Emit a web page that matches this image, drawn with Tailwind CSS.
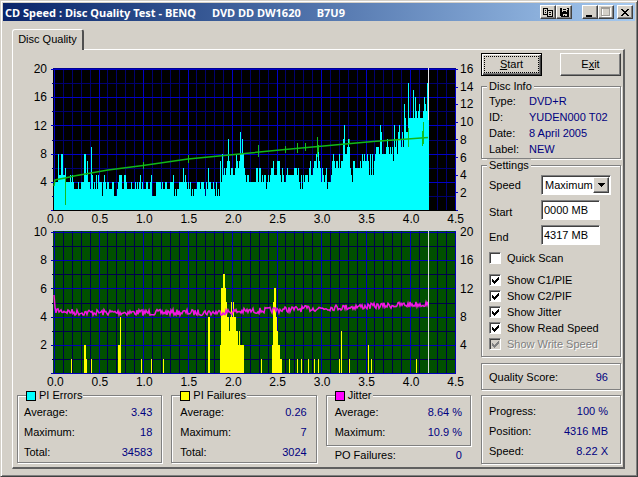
<!DOCTYPE html>
<html lang="en">
<head>
  <meta charset="UTF-8" />
  <meta name="viewport" content="width=device-width, initial-scale=1" />
  <title>CD Speed : Disc Quality Test</title>
  <script src="https://cdn.jsdelivr.net/npm/@tailwindcss/browser@4"></script>
</head>
<body class="bg-[#d4d0c8] text-black font-['Liberation_Sans',Arial,sans-serif] text-[11px] leading-[13px]">
<div class="min-h-screen flex flex-col p-[2px] border border-t-[#d4d0c8] border-l-[#d4d0c8] border-r-[#404040] border-b-[#404040] shadow-[inset_1px_1px_0_#fff,inset_-1px_-1px_0_#808080]">

  <!-- TITLE BAR -->
  <header class="h-[18px] flex items-center pl-[2px] pr-[2px] bg-linear-to-r from-[#0a246a] to-[#a6caf0]">
    <h1 class="flex-1 flex gap-4 text-white font-bold whitespace-pre font-['Noto_Sans','Open_Sans',sans-serif]"><span>CD Speed : Disc Quality Test - BENQ</span><span>DVD DD DW1620</span><span>B7U9</span></h1>
    <div class="flex">
      <button aria-label="Copy" class="w-4 h-[14px] bg-[#d4d0c8] border border-t-white border-l-white border-r-[#404040] border-b-[#404040] shadow-[inset_-1px_-1px_0_#808080] flex items-center justify-center">
        <svg width="10" height="9" viewBox="0 0 10 9" shape-rendering="crispEdges"><path d="M.5.5h4v6h-4zM4.500 2.500h5v6h-5z" fill="#d4d0c8" stroke="#000"/><path d="M2 2.500h1M2 4.500h1M6 4.500h2M6 6.500h2" stroke="#000"/></svg>
      </button>
      <button aria-label="Save" class="w-4 h-[14px] bg-[#d4d0c8] border border-t-white border-l-white border-r-[#404040] border-b-[#404040] shadow-[inset_-1px_-1px_0_#808080] flex items-center justify-center">
        <svg width="9" height="9" viewBox="0 0 9 9" shape-rendering="crispEdges"><path d="M0 0h9v9H1L0 8z" fill="#000"/><path d="M2 0h5v4H2zM3 6h4v2H5V7H4v1H3zM8 1h-1v1h1z" fill="#d4d0c8"/><path d="M3 1.500h3M3 3.500h3" stroke="#000"/></svg>
      </button>
      <button aria-label="Minimize" class="ml-[10px] w-4 h-[14px] bg-[#d4d0c8] border border-t-white border-l-white border-r-[#404040] border-b-[#404040] shadow-[inset_-1px_-1px_0_#808080] flex items-center justify-center">
        <svg width="10" height="9" viewBox="0 0 10 9" shape-rendering="crispEdges"><path d="M1 7h6v2H1z"/></svg>
      </button>
      <button aria-label="Maximize" disabled class="w-4 h-[14px] bg-[#d4d0c8] border border-t-white border-l-white border-r-[#404040] border-b-[#404040] shadow-[inset_-1px_-1px_0_#808080] flex items-center justify-center">
        <svg width="10" height="10" viewBox="0 0 10 10" shape-rendering="crispEdges"><path d="M1.500 1.500h8v8h-8z" fill="none" stroke="#fff"/><path d="M.5.5h8v8h-8zM0 1.500h9" fill="none" stroke="#a09d98"/></svg>
      </button>
      <button aria-label="Close" class="ml-[3px] w-4 h-[14px] bg-[#d4d0c8] border border-t-white border-l-white border-r-[#404040] border-b-[#404040] shadow-[inset_-1px_-1px_0_#808080] flex items-center justify-center">
        <svg width="8" height="7" viewBox="0 0 8 7" shape-rendering="crispEdges"><path d="M0 0h2v1h1v1h2V1h1V0h2v1H7v1H6v1H5v1h1v1h1v1h1v1H6V6H5V5H3v1H2v1H0V6h1V5h1V4h1V3H2V2H1V1H0z"/></svg>
      </button>
    </div>
  </header>

  <main class="flex-1 flex flex-col mt-2 ml-[9px] mr-[10px] mb-[5px]">
    <!-- TAB -->
    <div role="tablist" class="flex">
      <button role="tab" aria-selected="true" class="relative z-10 h-[21px] -mb-px w-[72px] pb-px bg-[#d4d0c8] border-t border-l border-white border-r-2 border-r-[#505050] rounded-t-[3px]">Disc Quality</button>
    </div>

    <!-- TAB PAGE -->
    <div class="flex-1 flex gap-[10px] pt-[3px] pl-1 pr-[2px] border-t border-l border-t-white border-l-white border-r-2 border-b-2 border-r-[#606060] border-b-[#606060]">

      <!-- CHARTS -->
      <section class="flex-1 pt-[10px]">
        <div class="flex text-[12px]">
          <div class="w-9 h-[126px] pr-[6px] flex flex-col justify-between text-right"><span>20</span><span>16</span><span>12</span><span>8</span><span>4</span></div>
          <svg id="pie" class="flex-1 min-w-0 mt-[5px] h-[143px] overflow-visible" viewBox="0 0 403 143" preserveAspectRatio="none" shape-rendering="crispEdges"></svg>
          <div class="w-[15px] h-[137px] pl-1 flex flex-col justify-between"><span>16</span><span>14</span><span>12</span><span>10</span><span>8</span><span>6</span><span>4</span><span>2</span></div>
        </div>
        <div class="mt-[2px] ml-[30px] mr-[7px] flex justify-between text-[12px]"><span>0.0</span><span>0.5</span><span>1.0</span><span>1.5</span><span>2.0</span><span>2.5</span><span>3.0</span><span>3.5</span><span>4.0</span><span>4.5</span></div>

        <div class="flex text-[12px]">
          <div class="w-9 h-[126px] pr-[6px] flex flex-col justify-between text-right"><span>10</span><span>8</span><span>6</span><span>4</span><span>2</span></div>
          <svg id="pif" class="flex-1 min-w-0 mt-[5px] h-[143px] overflow-visible" viewBox="0 0 403 143" preserveAspectRatio="none" shape-rendering="crispEdges"></svg>
          <div class="w-[15px] h-[126px] pl-1 flex flex-col justify-between"><span>20</span><span>16</span><span>12</span><span>8</span><span>4</span></div>
        </div>
        <div class="mt-[2px] ml-[30px] mr-[7px] flex justify-between text-[12px]"><span>0.0</span><span>0.5</span><span>1.0</span><span>1.5</span><span>2.0</span><span>2.5</span><span>3.0</span><span>3.5</span><span>4.0</span><span>4.5</span></div>

        <!-- TOTALS -->
        <div class="grid grid-cols-3 items-start gap-[9px] leading-[20px]">
          <fieldset class="min-w-0 pl-[6px] pr-[9px] border border-[#808080] shadow-[1px_1px_0_#fff,inset_1px_1px_0_#fff]">
            <legend class="flex items-center gap-1 ml-[2px] pl-px pr-px leading-[13px] bg-[#d4d0c8]"><i class="size-2 bg-[#00ffff] outline outline-black"></i>PI Errors</legend>
            <dl>
              <div class="flex justify-between"><dt>Average:</dt><dd class="text-[#000080]">3.43</dd></div>
              <div class="flex justify-between"><dt>Maximum:</dt><dd class="text-[#000080]">18</dd></div>
              <div class="flex justify-between"><dt>Total:</dt><dd class="text-[#000080]">34583</dd></div>
            </dl>
          </fieldset>
          <fieldset class="min-w-0 pl-[8px] pr-[9px] border border-[#808080] shadow-[1px_1px_0_#fff,inset_1px_1px_0_#fff]">
            <legend class="flex items-center gap-1 pl-px pr-px leading-[13px] bg-[#d4d0c8]"><i class="size-2 bg-[#ffff00] outline outline-black"></i>PI Failures</legend>
            <dl>
              <div class="flex justify-between"><dt>Average:</dt><dd class="text-[#000080]">0.26</dd></div>
              <div class="flex justify-between"><dt>Maximum:</dt><dd class="text-[#000080]">7</dd></div>
              <div class="flex justify-between"><dt>Total:</dt><dd class="text-[#000080]">3024</dd></div>
            </dl>
          </fieldset>
          <div class="min-w-0">
            <fieldset class="pl-[8px] pr-[8px] pb-[3px] border border-[#808080] shadow-[1px_1px_0_#fff,inset_1px_1px_0_#fff]">
              <legend class="flex items-center gap-1 pl-px pr-px leading-[13px] bg-[#d4d0c8]"><i class="size-2 bg-[#ff00ff] outline outline-black"></i>Jitter</legend>
              <dl>
                <div class="flex justify-between"><dt>Average:</dt><dd class="text-[#000080]">8.64 %</dd></div>
                <div class="flex justify-between"><dt>Maximum:</dt><dd class="text-[#000080]">10.9 %</dd></div>
              </dl>
            </fieldset>
            <dl class="flex justify-between leading-[18px] px-[9px]"><dt>PO Failures:</dt><dd class="text-[#000080]">0</dd></dl>
          </div>
        </div>
      </section>

      <!-- SIDE PANEL -->
      <aside class="w-[140px]">
        <div class="flex justify-between">
          <button class="w-[61px] h-[23px] p-[2px] border border-black shadow-[inset_1px_1px_0_#fff,inset_-1px_-1px_0_#404040,inset_-2px_-2px_0_#808080]"><span class="flex h-full items-center justify-center border border-dotted border-black"><span><u>S</u>tart</span></span></button>
          <button class="w-[61px] h-[23px] border border-t-white border-l-white border-r-[#404040] border-b-[#404040] shadow-[inset_-1px_-1px_0_#808080]">E<u>x</u>it</button>
        </div>

        <fieldset class="mt-1 pl-[7px] pb-px leading-4 border border-[#808080] shadow-[1px_1px_0_#fff,inset_1px_1px_0_#fff]">
          <legend class="px-[2px] -ml-[2px] leading-[13px] bg-[#d4d0c8]">Disc Info</legend>
          <dl class="grid grid-cols-[40px_1fr]">
            <dt>Type:</dt><dd class="text-[#000080]">DVD+R</dd>
            <dt>ID:</dt><dd class="text-[#000080] whitespace-nowrap">YUDEN000 T02</dd>
            <dt>Date:</dt><dd class="text-[#000080]">8 April 2005</dd>
            <dt>Label:</dt><dd class="text-[#000080]">NEW</dd>
          </dl>
        </fieldset>

        <fieldset class="pl-[7px] pb-[4px] border border-[#808080] shadow-[1px_1px_0_#fff,inset_1px_1px_0_#fff]">
          <legend class="px-[2px] -ml-[2px] leading-[13px] bg-[#d4d0c8]">Settings</legend>
          <div class="mt-[3px] grid grid-cols-[52px_1fr] gap-y-[5px] items-center">
            <label for="speed">Speed</label>
            <div class="relative w-[70px]">
              <select id="speed" class="block w-full h-5 pl-[3px] appearance-none bg-white border border-t-[#808080] border-l-[#808080] border-r-white border-b-white shadow-[inset_1px_1px_0_#404040]"><option>Maximum</option><option>8 X</option><option>4 X</option></select>
              <span class="absolute right-[2px] top-[2px] w-4 h-4 pointer-events-none bg-[#d4d0c8] border border-t-white border-l-white border-r-[#404040] border-b-[#404040] shadow-[inset_-1px_-1px_0_#808080] flex items-center justify-center">
                <svg width="7" height="4" viewBox="0 0 7 4" shape-rendering="crispEdges"><path d="M0 0h7v1H6v1H5v1H4v1H3V3H2V2H1V1H0z"/></svg>
              </span>
            </div>
            <label for="start" class="pt-1">Start</label>
            <input id="start" type="text" value="0000 MB" class="w-[59px] h-5 pl-[2px] bg-white border border-t-[#808080] border-l-[#808080] border-r-white border-b-white shadow-[inset_1px_1px_0_#404040]" />
            <label for="end" class="pt-1">End</label>
            <input id="end" type="text" value="4317 MB" class="w-[59px] h-5 pl-[2px] bg-white border border-t-[#808080] border-l-[#808080] border-r-white border-b-white shadow-[inset_1px_1px_0_#404040]" />
          </div>
          <div class="mt-[5px] leading-4">
            <label class="flex items-center gap-[6px] mb-[6px]"><input type="checkbox" class="appearance-none size-3 bg-white border border-t-[#808080] border-l-[#808080] border-r-white border-b-white shadow-[inset_1px_1px_0_#404040]" />Quick Scan</label>
            <label class="flex items-center gap-[6px]"><span class="grid place-items-center"><input type="checkbox" checked class="peer col-start-1 row-start-1 appearance-none size-3 bg-white border border-t-[#808080] border-l-[#808080] border-r-white border-b-white shadow-[inset_1px_1px_0_#404040]" /><svg class="col-start-1 row-start-1 invisible peer-checked:visible pointer-events-none" width="7" height="7" viewBox="0 0 7 7" shape-rendering="crispEdges"><path d="M0 2h1v1h1v1h1V3h1V2h1V1h1V0h1v3H6v1H5v1H4v1H3v1H2V6H1V5H0z"/></svg></span>Show C1/PIE</label>
            <label class="flex items-center gap-[6px]"><span class="grid place-items-center"><input type="checkbox" checked class="peer col-start-1 row-start-1 appearance-none size-3 bg-white border border-t-[#808080] border-l-[#808080] border-r-white border-b-white shadow-[inset_1px_1px_0_#404040]" /><svg class="col-start-1 row-start-1 invisible peer-checked:visible pointer-events-none" width="7" height="7" viewBox="0 0 7 7" shape-rendering="crispEdges"><path d="M0 2h1v1h1v1h1V3h1V2h1V1h1V0h1v3H6v1H5v1H4v1H3v1H2V6H1V5H0z"/></svg></span>Show C2/PIF</label>
            <label class="flex items-center gap-[6px]"><span class="grid place-items-center"><input type="checkbox" checked class="peer col-start-1 row-start-1 appearance-none size-3 bg-white border border-t-[#808080] border-l-[#808080] border-r-white border-b-white shadow-[inset_1px_1px_0_#404040]" /><svg class="col-start-1 row-start-1 invisible peer-checked:visible pointer-events-none" width="7" height="7" viewBox="0 0 7 7" shape-rendering="crispEdges"><path d="M0 2h1v1h1v1h1V3h1V2h1V1h1V0h1v3H6v1H5v1H4v1H3v1H2V6H1V5H0z"/></svg></span>Show Jitter</label>
            <label class="flex items-center gap-[6px]"><span class="grid place-items-center"><input type="checkbox" checked class="peer col-start-1 row-start-1 appearance-none size-3 bg-white border border-t-[#808080] border-l-[#808080] border-r-white border-b-white shadow-[inset_1px_1px_0_#404040]" /><svg class="col-start-1 row-start-1 invisible peer-checked:visible pointer-events-none" width="7" height="7" viewBox="0 0 7 7" shape-rendering="crispEdges"><path d="M0 2h1v1h1v1h1V3h1V2h1V1h1V0h1v3H6v1H5v1H4v1H3v1H2V6H1V5H0z"/></svg></span>Show Read Speed</label>
            <label class="flex items-center gap-[6px] text-[#808080] text-shadow-[1px_1px_0_#fff]"><span class="grid place-items-center"><input type="checkbox" checked disabled class="peer col-start-1 row-start-1 appearance-none size-3 bg-[#d4d0c8] border border-t-[#808080] border-l-[#808080] border-r-white border-b-white shadow-[inset_1px_1px_0_#404040]" /><svg class="col-start-1 row-start-1 invisible peer-checked:visible pointer-events-none fill-[#808080]" width="7" height="7" viewBox="0 0 7 7" shape-rendering="crispEdges"><path d="M0 2h1v1h1v1h1V3h1V2h1V1h1V0h1v3H6v1H5v1H4v1H3v1H2V6H1V5H0z"/></svg></span>Show Write Speed</label>
          </div>
        </fieldset>

        <dl class="mt-[6px] h-[27px] pt-px flex items-center justify-between pl-[7px] pr-[12px] border border-[#808080] shadow-[1px_1px_0_#fff,inset_1px_1px_0_#fff]">
          <dt>Quality Score:</dt><dd class="text-[#000080]">96</dd>
        </dl>

        <dl class="mt-[5px] pt-[5px] pb-[2px] pl-[7px] pr-[12px] leading-[20px] border border-[#808080] shadow-[1px_1px_0_#fff,inset_1px_1px_0_#fff]">
          <div class="flex justify-between"><dt>Progress:</dt><dd class="text-[#000080]">100 %</dd></div>
          <div class="flex justify-between"><dt>Position:</dt><dd class="text-[#000080]">4316 MB</dd></div>
          <div class="flex justify-between"><dt>Speed:</dt><dd class="text-[#000080]">8.22 X</dd></div>
        </dl>
      </aside>
    </div>
  </main>
</div>

<script>
  // PI errors, one base-36 digit per column of the plot
  const PIE =
    "4444855885" + "5644445454" + "3333433444" + "8857443953" + "4353544424" +
    "5434433344" + "2223455533" + "5543333433" + "3434345343" + "3344334522" +
    "2244444343" + "3443334445" + "2323344446" + "4543434232" + "3334443444" +
    "3243644334" + "3242327485" + "6567a75665" + "568767b8a8" + "6545544444" +
    "4466466454" + "5534545667" + "5557775465" + "4456555555" + "6665643535" +
    "4555467556" + "7786976465" + "4563444578" + "767768677a" + "c889a96547" +
    "7666667687" + "8778758585" + "789998cb88" + "889a989897" + "c9a8bca9b9" +
    "fdbbiddddh" + "dgedefddde" + "gfeii";

  // PI failures: [column, width, value]
  const PIF = [
    [17,1,1],[30,2,2],[32,1,1],[37,1,1],[64,2,2],[66,1,4],[87,1,1],[97,1,1],[109,1,1],[154,2,4],
    [166,1,2],[167,2,6],[169,2,7],[171,1,6],[172,1,5],[173,2,4],[175,1,3],[176,1,4],[177,1,5],
    [178,1,4],[179,1,5],[180,2,4],[182,2,3],[184,1,2],[185,1,3],[186,4,2],[207,1,1],[218,1,2],
    [219,1,5],[220,2,6],[222,1,4],[223,1,3],[224,2,2],[226,2,1],[235,1,1],[243,1,1],[247,1,1],
    [254,1,1],[260,1,1],[264,1,1],[285,1,1],[287,1,3],[295,1,1],[314,1,2],[317,1,1],[362,1,1]
  ];

  // read speed curve and its spikes: [x, top, bottom]
  const SPEED = "1,118 2,112 12,110 21,108 55,102 90,97.500 135,91 197,85 232,81.500 265,78.500 320,73.500 375,69.500";
  const SPIKES = [[12,110,137],[90,94,101],[135,87,95],[205,77,89],[232,78,85],[244,75,85],[252,75,83],[264,69,89],
    [265,77,84],[296,71,76],[355,60,79],[369,63,78],[370,54,76]];

  function grid(minor, major) {
    let a = "", b = "";
    for (let i = 0; i <= 45; i++) {
      const d = `M${Math.round(1 + i * 8.9) + 0.5} 0V143`;
      if (i % 5) a += d; else b += d;
    }
    for (let i = 0; i <= 10; i++) {
      const y = Math.round(1 + i * 14.1) + 0.5;
      if (i % 2) a += `M-1 ${y}H403`; else b += `M-2 ${y}H403`;
    }
    return `<path d="${a}" stroke="${minor}" fill="none"/><path d="${b}" stroke="${major}" fill="none"/>`;
  }

  function drawErrors() {
    let bars = "", spikes = "", ticks = "";
    [...PIE].forEach((c, i) => {
      const h = Math.round(parseInt(c, 36) * 7.05);
      bars += `M${i + 1} 142v-${h}h1v${h}z`;
    });
    SPIKES.forEach(([x, t, b]) => spikes += `M${x + 0.5} ${t}V${b}`);
    for (let i = 0; i <= 8; i++) ticks += `M403 ${Math.round(1 + i * 17.6) + 0.5}h2`;
    document.getElementById("pie").innerHTML =
      `<rect width="403" height="143" fill="#000"/>` + grid("#000070", "#0000c8") +
      `<path d="M0 .5H403" stroke="#000090"/><path d="${ticks}" stroke="#0000c8"/>` +
      `<path d="${bars}" fill="#00ffff"/>` +
      `<path d="M375.500 0V52" stroke="#e8e8e8"/>` +
      `<polyline points="${SPEED}" fill="none" stroke="#10b818" shape-rendering="auto" stroke-width="1.5"/><path d="${spikes}" stroke="#10c020"/>` +
      `<path d="M0 142.500H403" stroke="#000"/>`;
  }

  function drawFailures() {
    let bars = "", jitter = "1,64 2,76";
    PIF.forEach(([x, w, v]) => {
      const h = Math.round(v * 14.1);
      bars += `M${x + 1} 142v-${h}h${w}v${h}z`;
    });
    let seed = 7;
    for (let x = 2; x < 376; x++) {
      seed = (seed * 16807) % 2147483647;
      const base = x < 20 ? 79 + x / 10 : x < 160 ? 81.5 : 81.5 - (x - 160) * 0.04;
      jitter += ` ${x},${(base + (seed / 2147483647 - 0.5) * 6).toFixed(1)}`;
    }
    document.getElementById("pif").innerHTML =
      `<rect width="403" height="143" fill="#005000"/>` + grid("#00004c", "#0000b8") +
      `<path d="M0 -.5H403" stroke="#c0d0f0"/>` +
      `<path d="${bars}" fill="#ffff00"/>` +
      `<polyline points="${jitter}" fill="none" stroke="#f018e0" shape-rendering="auto" stroke-width="1.5"/>` +
      `<path d="M375.500 0V142" stroke="#d8dcd8"/>`;
  }

  drawErrors();
  drawFailures();
</script>
</body>
</html>
